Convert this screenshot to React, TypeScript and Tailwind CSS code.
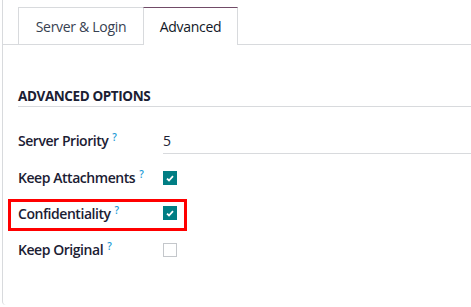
import React from "react";

const Help = () => (
  <span className="ml-[4px] inline-block align-top text-[10px] leading-[10px] font-semibold tracking-normal text-[#1d9bd6] relative top-[1px]">?</span>
);

const Check = ({ checked }: { checked: boolean }) =>
  checked ? (
    <div className="w-[14px] h-[14px] bg-[#017e84] flex items-center justify-center">
      <svg width="8" height="7" viewBox="0 0 8 7">
        <path d="M1 3.6 L3 5.5 L7 1.2" stroke="white" strokeWidth="1.8" fill="none" />
      </svg>
    </div>
  ) : (
    <div className="w-[14px] h-[14px] border border-[#c4c7cb] bg-white" />
  );

const Row = ({ label, children, first }: { label: string; children: React.ReactNode; first?: boolean }) => (
  <div className={first ? "flex h-[37px] items-start pt-[8px]" : "flex h-[36px] items-start pt-[8px]"}>
    <div className="w-[145px] shrink-0 text-[14px] leading-[20px] font-semibold tracking-[-0.45px] text-[#1b2033]">
      {label}
      <Help />
    </div>
    {children}
  </div>
);

export default function App() {
  return (
    <div
      className="w-[471px] h-[307px] bg-white relative overflow-hidden"
      style={{ fontFamily: '"Open Sans", "Liberation Sans", sans-serif' }}
    >
      <div className="ml-[2px] h-[305px] border-l border-[#d8dadd] rounded-bl-[4px]">
        <div className="flex items-end pt-[7px] pl-[15px] border-b border-[#d8dadd]">
          <div className="w-[125px] h-[38px] -mb-px border-l border-t border-b border-[#d8dadd] flex items-center justify-center text-[14px] tracking-[-0.3px] text-[#374151]">
            Server &amp; Login
          </div>
          <div className="w-[95px] h-[38px] -mb-px border-l border-r border-[#d8dadd] border-t border-t-[#714b67] bg-white flex items-center justify-center text-[14px] tracking-[-0.3px] text-[#111827]">
            Advanced
          </div>
        </div>
        <div className="pl-[15px]">
          <div className="mt-[41px] text-[13.5px] leading-[20px] font-bold tracking-[-0.4px] text-[#1b2033] border-b border-[#d8dadd]">
            ADVANCED OPTIONS
          </div>
          <div className="mt-[16px]">
            <Row label="Server Priority" first>
              <div className="flex-1 text-[14px] leading-[20px] text-[#1b2033] pb-[2px] border-b border-[#d8dadd]">5</div>
            </Row>
            <Row label="Keep Attachments">
              <div className="mt-[3px]"><Check checked /></div>
            </Row>
            <Row label="Confidentiality">
              <div className="mt-[2px]"><Check checked /></div>
            </Row>
            <Row label="Keep Original">
              <div className="mt-[3px]"><Check checked={false} /></div>
            </Row>
          </div>
        </div>
      </div>
      <div className="absolute left-[8px] top-[199px] w-[179px] h-[32px] border-[3px] border-[#ff0000]" />
    </div>
  );
}
